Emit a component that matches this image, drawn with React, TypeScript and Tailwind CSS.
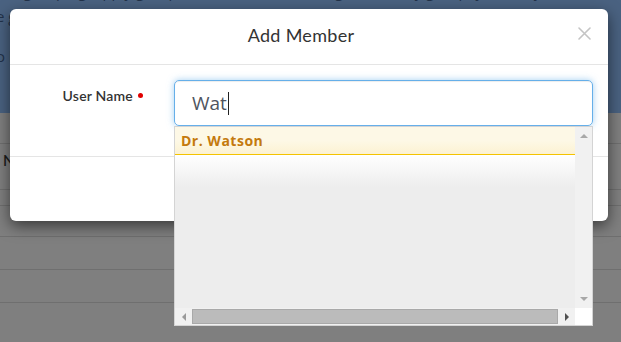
import React from 'react'

// Modal "Add Member" sopra la pagina oscurata, con il menu di completamento aperto.

const rows = [143, 189, 205, 236, 269, 302]

function CloseIcon() {
  return (
    <svg width="13" height="13" viewBox="0 0 13 13" className="block">
      <path d="M1 1 L12 12 M12 1 L1 12" stroke="#c4c4c4" strokeWidth="1.6" strokeLinecap="round" />
    </svg>
  )
}

function Tri({ dir, color }: { dir: 'up' | 'down' | 'left' | 'right'; color: string }) {
  const d = {
    up: 'M0 5 L4 1 L8 5 Z',
    down: 'M0 1 L8 1 L4 5 Z',
    left: 'M5 0 L5 8 L1 4 Z',
    right: 'M1 0 L1 8 L5 4 Z',
  }[dir]
  const vertical = dir === 'up' || dir === 'down'
  return (
    <svg width={vertical ? 8 : 6} height={vertical ? 6 : 8} viewBox={vertical ? '0 0 8 6' : '0 0 6 8'} className="block">
      <path d={d} fill={color} />
    </svg>
  )
}

function Backdrop() {
  return (
    <div className="flex h-full flex-col">
      <div className="h-[113px] overflow-hidden bg-[#4a6281] text-[15px] leading-[22px] text-[#22324a] font-['Open_Sans',sans-serif]">
        <p className="-mt-[20px] whitespace-nowrap pl-[2px]">
          ne grouping, apply groups to members and assign access by group, you can yo
        </p>
        <p className="-ml-[4px] mt-[3px] whitespace-nowrap">e groups to simplify member management.</p>
        <p className="-ml-[4px] mt-[18px] whitespace-nowrap">o help you manage.</p>
      </div>
      <div className="relative flex-1 bg-[#7f7f7f]">
        <div className="pl-[3px] pt-[40px] text-[15px] font-semibold leading-none text-[#1c1c1c] font-['Lato',sans-serif]">
          N
        </div>
        {rows.map((y) => (
          <div key={y} className="absolute inset-x-0 h-px bg-[#6f6f6f]" style={{ top: y - 113 }} />
        ))}
      </div>
    </div>
  )
}

function Dropdown() {
  return (
    <div className="absolute left-0 top-full flex h-[200px] w-full flex-col border border-[#d4d4d4] bg-white">
      <div className="flex min-h-0 flex-1">
        <div className="flex flex-1 flex-col bg-[#ededed]">
          <div className="flex h-[28px] items-center border-b border-[#f4c300] bg-[linear-gradient(#fdf8e6_0%,#fdf8e6_50%,#fcf2d2_100%)] pl-[6px] text-[14px] font-bold tracking-[0.5px] text-[#c47a0e] font-['Open_Sans',sans-serif]">
            Dr. Watson
          </div>
          <div className="h-[32px] bg-[linear-gradient(#ffffff,#ededed)]" />
        </div>
        <div className="flex w-[17px] flex-col items-center justify-between bg-[#f1f1f1] py-[6px]">
          <Tri dir="up" color="#a8a8a8" />
          <Tri dir="down" color="#a8a8a8" />
        </div>
      </div>
      <div className="flex h-[17px] bg-[#f1f1f1]">
        <div className="flex w-[17px] items-center justify-center">
          <Tri dir="left" color="#9a9a9a" />
        </div>
        <div className="my-[1px] flex-1 border border-[#a9a9a9] bg-[#bbbbbb]" />
        <div className="flex w-[17px] items-center justify-center">
          <Tri dir="right" color="#505050" />
        </div>
        <div className="w-[17px] bg-white" />
      </div>
    </div>
  )
}

export default function App() {
  return (
    <div className="relative h-[342px] w-[621px] overflow-hidden">
      <Backdrop />

      <div className="absolute left-[10px] top-[9px] w-[598px] rounded-[6px] bg-white shadow-[0_5px_15px_rgba(0,0,0,0.55)]">
        <div className="relative flex h-[56px] items-center justify-center border-b border-[#e5e5e5] pr-[16px]">
          <h2 className="-mt-[3px] text-[18px] leading-none tracking-[0.3px] text-[#333] font-['Lato',sans-serif]">Add Member</h2>
          <button type="button" className="absolute right-[17px] top-[18px]">
            <CloseIcon />
          </button>
        </div>

        <div className="flex items-start pb-[30px] pt-[15px]">
          <label className="flex w-[164px] items-center justify-end gap-[5px] pr-[31px] pt-[5px] text-[14px] font-semibold tracking-[0.2px] text-[#333] font-['Lato',sans-serif]">
            User Name
            <span className="h-[5px] w-[5px] rounded-full bg-[#e10000]" />
          </label>
          <div className="relative mr-[15px] flex-1">
            <div className="flex h-[46px] items-center rounded-[5px] border border-[#66afe9] pl-[17px] text-[19px] text-[#4f5560] shadow-[inset_0_1px_1px_rgba(0,0,0,0.075),0_0_7px_rgba(102,175,233,0.6)] font-['Open_Sans',sans-serif]">
              Wat
              <span className="ml-px h-[23px] w-px bg-[#222]" />
            </div>
            <Dropdown />
          </div>
        </div>

        <div className="h-[65px] border-t border-[#e5e5e5]" />
      </div>
    </div>
  )
}
